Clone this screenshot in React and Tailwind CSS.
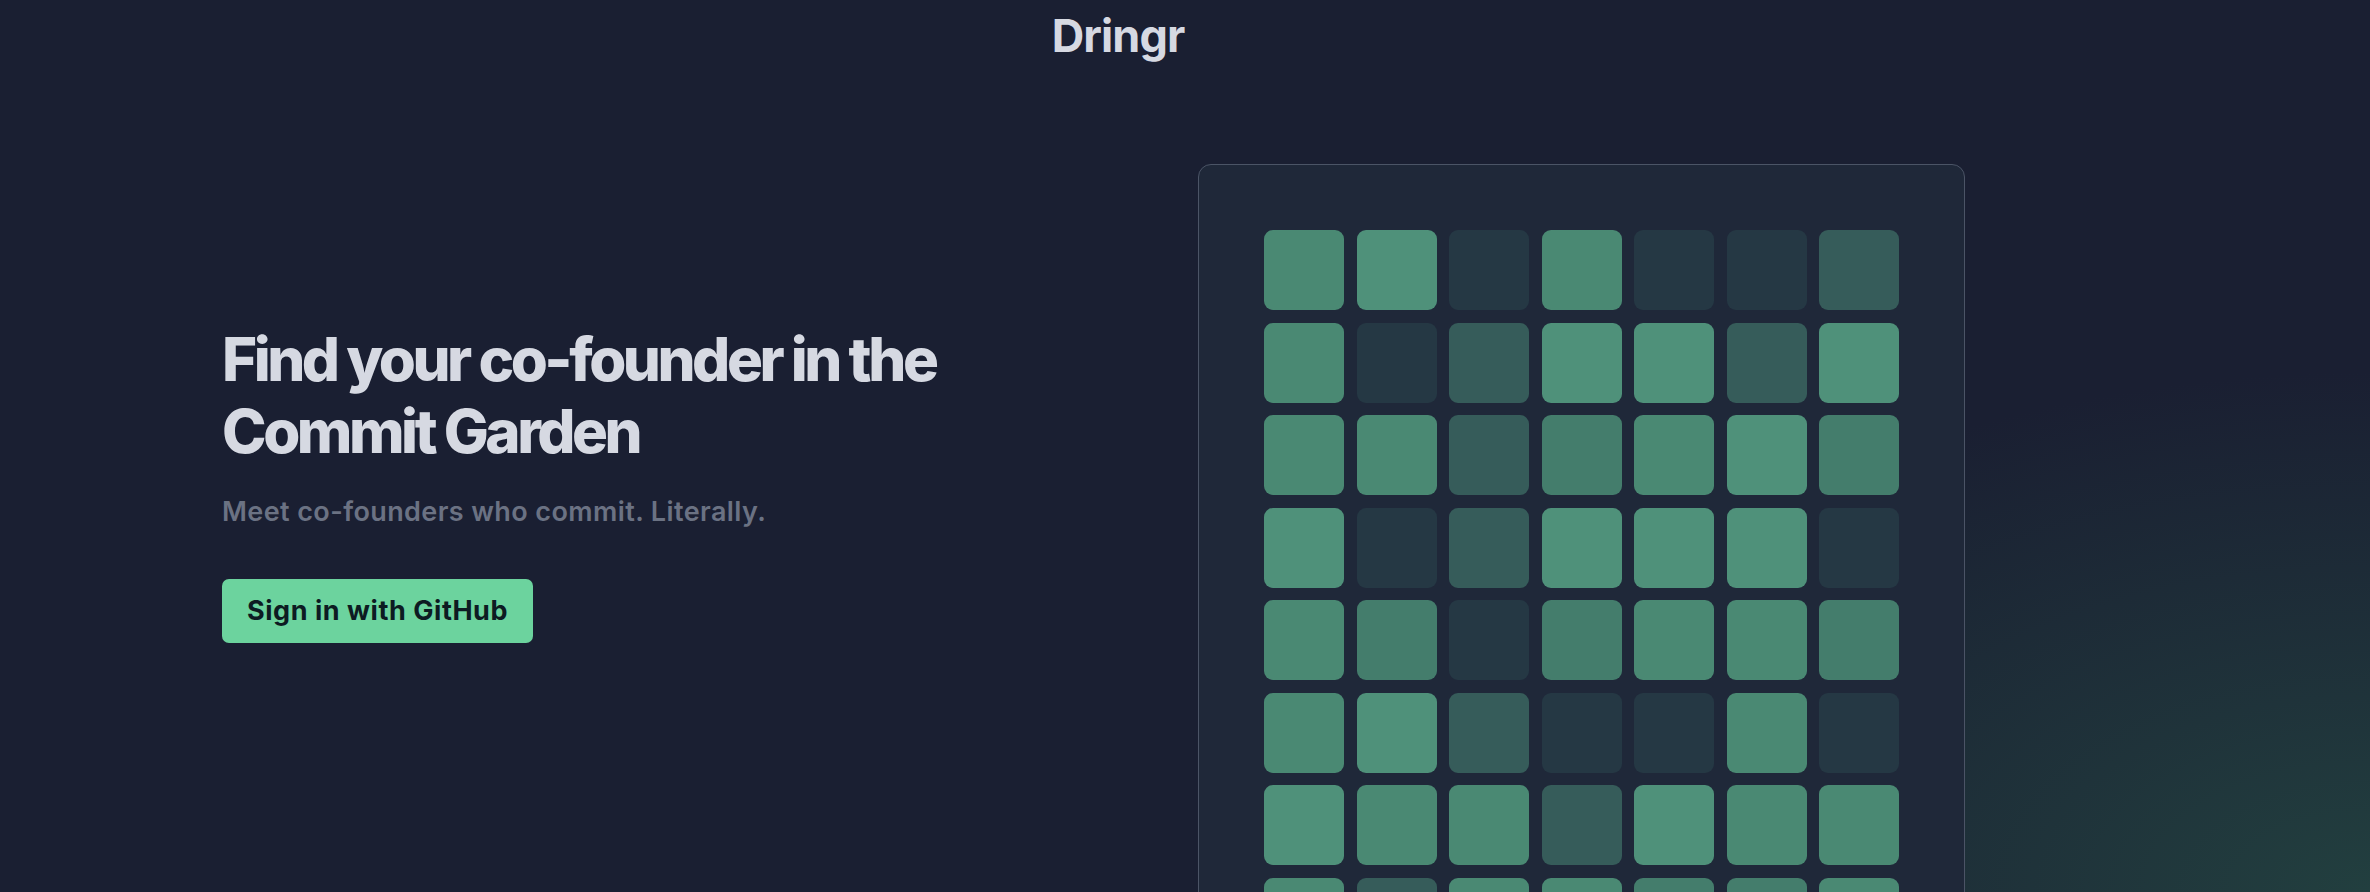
import React from 'react'

const shades = [
  'bg-[#253844]',
  'bg-[#365c5a]',
  'bg-[#447d6c]',
  'bg-[#4a8973]',
  'bg-[#4f917a]',
]

const garden = [
  [3, 4, 0, 3, 0, 0, 1],
  [3, 0, 1, 4, 4, 1, 4],
  [3, 3, 1, 2, 3, 4, 2],
  [4, 0, 1, 4, 4, 4, 0],
  [3, 2, 0, 2, 3, 3, 2],
  [3, 4, 1, 0, 0, 3, 0],
  [4, 3, 3, 1, 4, 3, 3],
  [3, 1, 3, 3, 2, 2, 3],
  [4, 3, 0, 3, 4, 1, 3],
  [2, 4, 3, 0, 3, 4, 1],
]

export default function App() {
  return (
    <div className="h-screen overflow-hidden bg-[#1a1f32] bg-[radial-gradient(ellipse_900px_520px_at_100%_100%,#223f3f_0%,rgba(26,31,50,0)_100%)] font-['Inter',sans-serif] text-[#d6d9e2]">
      <header className="pt-[9px] pr-[134px] text-center">
        <span className="text-[45px] leading-[54px] font-bold tracking-[-0.02em]">Dringr</span>
      </header>

      <main className="flex pl-[222px] pt-[101px]">
        <section className="w-[976px] pt-[159px]">
          <h1 className="text-[60px] leading-[72px] font-extrabold tracking-[-0.058em]">
            Find your co-founder in the
            <br />
            Commit Garden
          </h1>
          <p className="mt-[25px] text-[27px] leading-[40px] font-semibold tracking-[0.015em] text-[#6b7283]">
            Meet co-founders who commit. Literally.
          </p>
          <button className="mt-[47px] h-[64px] rounded-[7px] bg-[#6cd39e] px-[25px] text-[27px] font-bold tracking-[0.02em] text-[#0d1b22]">
            Sign in with GitHub
          </button>
        </section>

        <div className="w-[767px] shrink-0 rounded-[13px] border border-[#4b5466] bg-[#1f2839] p-[65px]">
          <div className="grid grid-cols-7 gap-[12.5px]">
            {garden.flat().map((v, i) => (
              <div key={i} className={`aspect-square rounded-[9px] ${shades[v]}`} />
            ))}
          </div>
        </div>
      </main>
    </div>
  )
}
